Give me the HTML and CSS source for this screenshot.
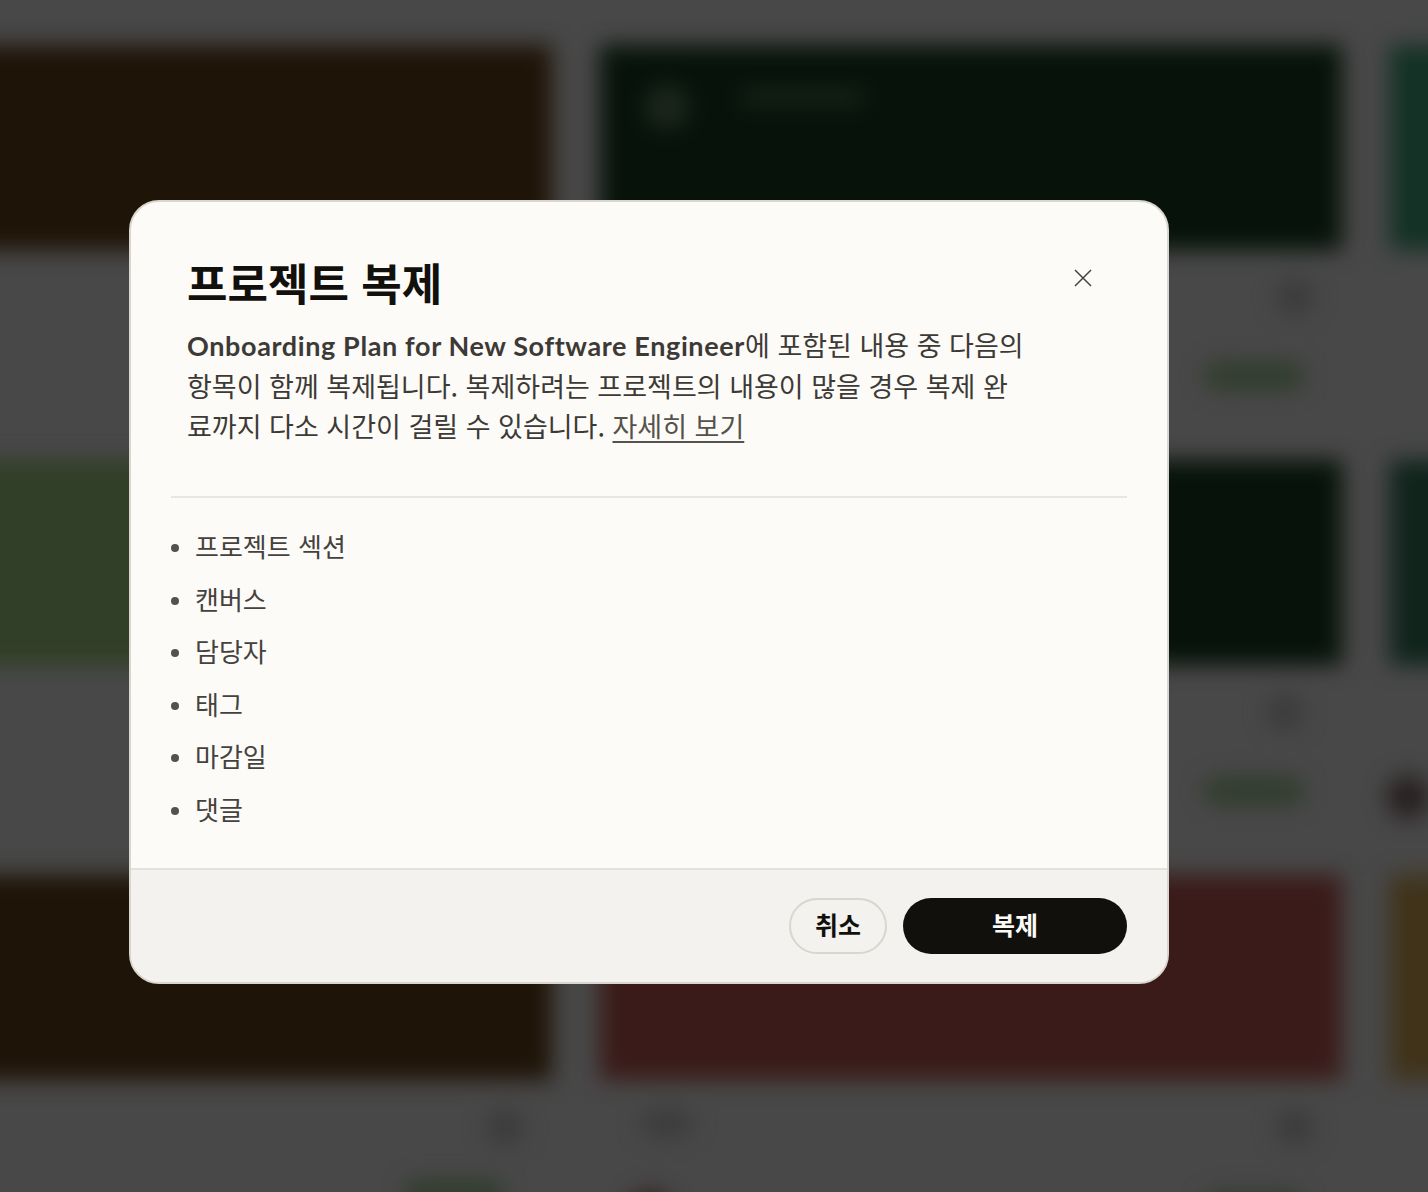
FILE: index.html
```
<!DOCTYPE html>
<html lang="ko">
<head>
<meta charset="utf-8">
<title>프로젝트 복제</title>
<link rel="stylesheet" href="styles.css">
</head>
<body>
<div class="backdrop" aria-hidden="true">
  <div class="grid">
    <div class="card"><div class="thumb brown"></div><div class="meta"></div></div>
    <div class="card">
      <div class="thumb forest"><span class="logo-blob"></span><span class="title-blob"></span></div>
      <div class="meta"><span class="dot dot-a"></span><span class="pill pill-a"></span></div>
    </div>
    <div class="card"><div class="thumb teal"></div><div class="meta"></div></div>
    <div class="card"><div class="thumb moss"><span class="text-blob"></span></div><div class="meta"></div></div>
    <div class="card">
      <div class="thumb forest"></div>
      <div class="meta"><span class="dot dot-b"></span><span class="pill pill-a"></span></div>
    </div>
    <div class="card"><div class="thumb pine"></div><div class="meta"><span class="avatar"></span></div></div>
    <div class="card">
      <div class="thumb brown"></div>
      <div class="meta"><span class="dot dot-a"></span><span class="pill pill-b"></span></div>
    </div>
    <div class="card">
      <div class="thumb maroon"></div>
      <div class="meta"><span class="dot dot-left"></span><span class="dot dot-a"></span><span class="pill pill-a"></span><span class="avatar avatar-b"></span></div>
    </div>
    <div class="card"><div class="thumb olive"></div><div class="meta"></div></div>
  </div>
</div>

<div class="overlay">
  <section class="modal" role="dialog" aria-labelledby="dialog-title">
    <div class="modal-main">
      <header class="modal-head">
        <div class="head-text">
          <h1 id="dialog-title">프로젝트 복제</h1>
          <p class="intro"><span class="project-name">Onboarding Plan for New Software Engineer</span>에 포함된 내용 중 다음의 항목이 함께 복제됩니다. 복제하려는 프로젝트의 내용이 많을 경우 복제 완료까지 다소 시간이 걸릴 수 있습니다. <a href="#" class="more">자세히 보기</a></p>
        </div>
        <button class="close" type="button" aria-label="닫기">
          <svg viewBox="0 0 18 18" width="18" height="18" fill="none" stroke="currentColor" stroke-width="1.5"><path d="M1 1l16 16M17 1L1 17"/></svg>
        </button>
      </header>
      <ul class="items">
        <li>프로젝트 섹션</li>
        <li>캔버스</li>
        <li>담당자</li>
        <li>태그</li>
        <li>마감일</li>
        <li>댓글</li>
      </ul>
    </div>
    <footer class="modal-foot">
      <button class="btn btn-cancel" type="button"><span class="btn-label">취소</span></button>
      <button class="btn btn-primary" type="button"><span class="btn-label">복제</span></button>
    </footer>
  </section>
</div>
</body>
</html>
```

FILE: styles.css
```
* { box-sizing: border-box; }
html, body { margin: 0; height: 100%; }
body {
  width: 1428px;
  height: 1192px;
  overflow: hidden;
  background: #484848;
  font-family: "Noto Sans CJK KR", "Noto Sans", sans-serif;
  position: relative;
}

/* blurred page behind the dialog */
.backdrop {
  position: absolute;
  inset: 0;
  overflow: hidden;
  background: #484848;
}
.grid {
  display: grid;
  grid-template-columns: repeat(3, 742px);
  column-gap: 48px;
  grid-auto-rows: 415px;
  margin: 45px 0 0 -190px;
  width: 2400px;
  filter: blur(11px);
}
.card { display: flex; flex-direction: column; }
.thumb { height: 205px; position: relative; flex: none; }
.meta { flex: 1; position: relative; }
.brown { background: #1f1408; }
.forest { background: #07130a; }
.teal { background: #143226; }
.moss { background: #323f28; }
.pine { background: #10241c; }
.maroon { background: #3a1b19; }
.olive { background: #40331a; }

.logo-blob {
  position: absolute; left: 45px; top: 40px;
  width: 44px; height: 44px; border-radius: 50%;
  background: #1c261e;
}
.title-blob {
  position: absolute; left: 140px; top: 45px;
  width: 125px; height: 14px; border-radius: 6px;
  background: #1a241c;
}
.text-blob {
  position: absolute; right: 0; top: 48px;
  width: 70px; height: 22px;
  background: #26321f;
}
.dot {
  position: absolute; top: 28px;
  width: 38px; height: 38px; border-radius: 50%;
  background: #3c3c3c;
}
.dot-a { right: 28px; }
.dot-b { right: 38px; }
.dot-left { left: 40px; width: 54px; height: 30px; }
.pill {
  position: absolute; top: 112px; right: 38px;
  width: 100px; height: 28px; border-radius: 14px;
  background: #303d2c;
}
.pill-b { right: 48px; top: 100px; }
.avatar {
  position: absolute; left: -4px; top: 110px;
  width: 44px; height: 44px; border-radius: 50%;
  background: #272120;
}
.avatar-b { left: 28px; background: #352020; }

/* dialog */
.overlay {
  position: absolute;
  inset: 0;
  padding: 200px 0 0 129px;
}
.modal {
  width: 1040px;
  height: 784px;
  display: flex;
  flex-direction: column;
  background: #fcfbf8;
  border: 2px solid #d9d6cf;
  border-radius: 30px;
  overflow: hidden;
}
.modal-main { flex: 1; padding: 0 40px; }
.modal-head {
  display: flex;
  justify-content: space-between;
  align-items: flex-start;
  height: 296px;
  padding: 52px 35px 0 16px;
  border-bottom: 2px solid #e8e6e1;
}
.head-text { width: 842px; }
h1 {
  margin: 0;
  font-size: 44px;
  line-height: 56px;
  font-weight: 700;
  color: #12100d;
}
.intro {
  margin: 15px 0 0;
  font-size: 27px;
  line-height: 40px;
  font-weight: 400;
  color: #3d3a36;
}
.project-name {
  font-family: "Lato", "Noto Sans", sans-serif;
  font-weight: 700;
  letter-spacing: 0.62px;
}
.more { color: #55524d; text-decoration: underline; text-underline-offset: 4px; }
.close {
  margin-top: 15px;
  padding: 0;
  width: 18px;
  height: 18px;
  border: 0;
  background: none;
  color: #45423e;
  display: block;
}
.close svg { display: block; }
.items {
  list-style: none;
  margin: 22px 0 0;
  padding: 0 0 0 24px;
}
.items li {
  position: relative;
  height: 52.5px;
  line-height: 52.5px;
  font-size: 26px;
  color: #45423e;
}
.items li::before {
  content: "";
  position: absolute;
  left: -24px;
  top: 24px;
  width: 8px;
  height: 8px;
  border-radius: 50%;
  background: #55524d;
}
.modal-foot {
  height: 114px;
  flex: none;
  display: flex;
  justify-content: flex-end;
  align-items: flex-start;
  gap: 16px;
  padding: 28px 40px 0;
  background: #f4f2ee;
  border-top: 2px solid #e4e2dd;
}
.btn {
  height: 56px;
  border-radius: 28px;
  font-family: inherit;
  font-size: 25px;
  font-weight: 700;
  padding: 0 0 4px;
  cursor: pointer;
}
.btn-cancel {
  width: 98px;
  background: transparent;
  border: 2px solid #d9d6cf;
  color: #12100d;
}
.btn-primary {
  width: 224px;
  background: #12100d;
  border: 0;
  color: #fcfbf8;
}
```
